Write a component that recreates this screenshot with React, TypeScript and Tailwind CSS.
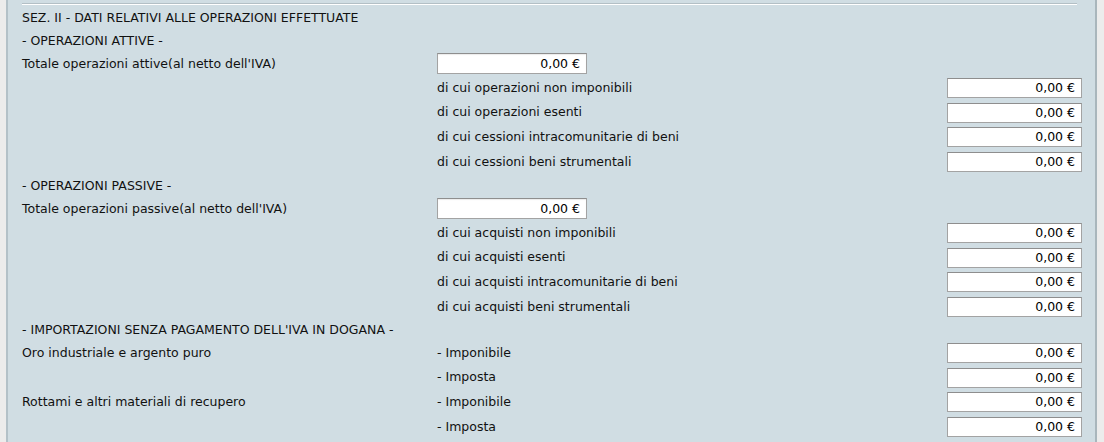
import React from "react";

const font = { fontFamily: '"DejaVu Sans", Verdana, sans-serif' };

function Money() {
  return (
    <div className="h-[21px] w-full border border-[#a3a3a3] border-t-[#8e8e8e] bg-white text-right pr-[6px] text-[12.5px] leading-[19px] text-black shadow-[inset_0_1px_1px_rgba(0,0,0,0.08)]">
      0,00 €
    </div>
  );
}

function Heading({ children }: { children: React.ReactNode }) {
  return <div className="h-[23px] flex items-center pt-[2px]">{children}</div>;
}

function TotalRow({ label }: { label: string }) {
  return (
    <div className="h-[23px] grid grid-cols-[415px_150px_1fr] items-center">
      <div className="pt-[1px]">{label}</div>
      <Money />
      <div />
    </div>
  );
}

function SubRow({ left = "", label }: { left?: string; label: string }) {
  return (
    <div className="h-[24.75px] grid grid-cols-[415px_1fr_135px] items-center">
      <div className="pt-[1px]">{left}</div>
      <div className="pt-[1px]">{label}</div>
      <div className="flex items-center h-full pt-[1px]">
        <div className="w-full h-[20px] border border-[#a3a3a3] border-t-[#8e8e8e] bg-white text-right pr-[6px] text-[12.5px] leading-[18px] text-black">
          0,00 €
        </div>
      </div>
    </div>
  );
}

export default function App() {
  return (
    <div className="w-[1104px] h-[442px] flex bg-[#ececec] overflow-hidden" style={font}>
      <div className="w-[6px] shrink-0" />
      <div className="flex-1 bg-[#d0dde3] border-l-2 border-r-2 border-l-[#b3c1c8] border-r-[#a9b6bc] pl-[14px] pr-[13px] text-[12.5px] text-[#111]">
        <div className="mt-[3px] mr-[5px] h-[2px] border-t border-t-[#b3bfc5] border-b border-b-white" />
        <div className="h-[1px]" />
        <Heading>SEZ. II - DATI RELATIVI ALLE OPERAZIONI EFFETTUATE</Heading>
        <Heading>- OPERAZIONI ATTIVE -</Heading>
        <TotalRow label="Totale operazioni attive(al netto dell'IVA)" />
        <SubRow label="di cui operazioni non imponibili" />
        <SubRow label="di cui operazioni esenti" />
        <SubRow label="di cui cessioni intracomunitarie di beni" />
        <SubRow label="di cui cessioni beni strumentali" />
        <Heading>- OPERAZIONI PASSIVE -</Heading>
        <TotalRow label="Totale operazioni passive(al netto dell'IVA)" />
        <SubRow label="di cui acquisti non imponibili" />
        <SubRow label="di cui acquisti esenti" />
        <SubRow label="di cui acquisti intracomunitarie di beni" />
        <SubRow label="di cui acquisti beni strumentali" />
        <div className="h-[21px] flex items-center pt-[1px]">- IMPORTAZIONI SENZA PAGAMENTO DELL'IVA IN DOGANA -</div>
        <SubRow left="Oro industriale e argento puro" label="- Imponibile" />
        <SubRow label="- Imposta" />
        <SubRow left="Rottami e altri materiali di recupero" label="- Imponibile" />
        <SubRow label="- Imposta" />
      </div>
      <div className="w-[7px] shrink-0" />
    </div>
  );
}
